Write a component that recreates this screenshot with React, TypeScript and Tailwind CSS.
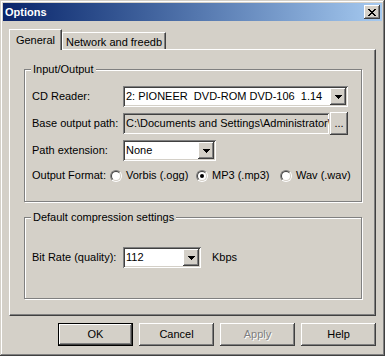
import React from 'react';

const raised =
  'shadow-[inset_-1px_-1px_#404040,inset_1px_1px_#fff,inset_-2px_-2px_#808080,inset_2px_2px_#d4d0c8]';
const sunken =
  'shadow-[inset_1px_1px_#808080,inset_-1px_-1px_#fff,inset_2px_2px_#404040,inset_-2px_-2px_#d4d0c8]';

function DownArrow() {
  return (
    <svg width="7" height="4" viewBox="0 0 7 4" shapeRendering="crispEdges">
      <rect x="0" y="0" width="7" height="1" fill="#000" />
      <rect x="1" y="1" width="5" height="1" fill="#000" />
      <rect x="2" y="2" width="3" height="1" fill="#000" />
      <rect x="3" y="3" width="1" height="1" fill="#000" />
    </svg>
  );
}

const closeRows = ['11000011', '01100110', '00111100', '00011000', '00111100', '01100110', '11000011'];

function CloseGlyph() {
  return (
    <svg width="8" height="7" viewBox="0 0 8 7" shapeRendering="crispEdges">
      {closeRows.map((row, y) =>
        row.split('').map((c, x) => (c === '1' ? <rect key={`${x}-${y}`} x={x} y={y} width="1" height="1" fill="#000" /> : null))
      )}
    </svg>
  );
}

function Combo({ value, className }: { value: string; className: string }) {
  return (
    <div className={`flex h-[21px] p-[2px] bg-white ${sunken} ${className}`}>
      <div className="flex-1 flex items-center pl-[1px] overflow-hidden whitespace-pre">{value}</div>
      <div className={`w-[16px] flex items-center justify-center bg-[#d4d0c8] ${raised}`}>
        <DownArrow />
      </div>
    </div>
  );
}

function Radio({ label, checked, className }: { label: string; checked?: boolean; className: string }) {
  return (
    <div className={`flex items-center ${className}`}>
      <div className="w-[12px] h-[12px] rounded-full border border-t-[#808080] border-l-[#808080] border-r-white border-b-white">
        <div className="w-full h-full rounded-full border border-t-[#404040] border-l-[#404040] border-r-[#d4d0c8] border-b-[#d4d0c8] bg-white flex items-center justify-center">
          {checked && <div className="w-[4px] h-[4px] rounded-full bg-black" />}
        </div>
      </div>
      <span className="ml-[4px]">{label}</span>
    </div>
  );
}

function Group({ title, className, children }: { title: string; className: string; children: React.ReactNode }) {
  return (
    <div className={`w-[338px] border border-[#808080] shadow-[1px_1px_#fff,inset_1px_1px_#fff] flex flex-col ${className}`}>
      <span className="-mt-[7px] ml-[6px] px-[2px] w-fit bg-[#d4d0c8] leading-[13px]">{title}</span>
      {children}
    </div>
  );
}

function Button({ label, isDefault, disabled }: { label: string; isDefault?: boolean; disabled?: boolean }) {
  return (
    <div className={`w-[75px] h-[23px] ${isDefault ? 'border border-black' : ''}`}>
      <div
        className={`w-full h-full flex items-center justify-center ${raised} ${
          disabled ? 'text-[#808080] [text-shadow:1px_1px_#fff]' : ''
        }`}
      >
        {label}
      </div>
    </div>
  );
}

export default function App() {
  return (
    <div
      className="w-[385px] h-[356px] bg-[#d4d0c8] p-[3px] flex flex-col text-[11px] leading-[13px] text-black shadow-[inset_-1px_-1px_#404040,inset_1px_1px_#d4d0c8,inset_-2px_-2px_#808080,inset_2px_2px_#fff]"
      style={{ fontFamily: '"Liberation Sans", Arial, sans-serif' }}
    >
      {/* title bar */}
      <div className="h-[18px] flex items-center justify-between pl-[2px] pr-[2px] bg-gradient-to-r from-[#0a246a] to-[#a6caf0]">
        <span className="text-white font-bold">Options</span>
        <div className={`w-[16px] h-[14px] bg-[#d4d0c8] flex items-center justify-center ${raised}`}>
          <CloseGlyph />
        </div>
      </div>

      <div className="flex flex-col px-[6px]">
        {/* tabs */}
        <div className="mt-[8px] h-[20px] flex items-end">
          <div className="relative z-10 -mb-px w-[53px] h-[21px] bg-[#d4d0c8] border-l border-t border-white border-r border-r-[#404040] shadow-[inset_-1px_0_#808080] flex justify-center pt-[4px]">
            General
          </div>
          <div className="w-[104px] h-[17px] border-l border-t border-white border-r border-r-[#404040] shadow-[inset_-1px_0_#808080] flex justify-center pt-[3px]">
            Network and freedb
          </div>
        </div>

        {/* tab page */}
        <div className="h-[267px] border-l border-t border-white border-r border-b border-r-[#404040] border-b-[#404040] shadow-[inset_-1px_-1px_#808080] flex flex-col pl-[14px] pt-[19px]">
          <Group title="Input/Output" className="pb-[19px]">
            <div className="mt-[10px] pl-[7px] flex items-center h-[21px]">
              <span className="w-[91px]">CD Reader:</span>
              <Combo value="2: PIONEER  DVD-ROM DVD-106  1.14" className="w-[225px]" />
            </div>
            <div className="mt-[5px] pl-[7px] flex items-center h-[23px]">
              <span className="w-[91px]">Base output path:</span>
              <div className={`w-[206px] h-[21px] p-[2px] flex items-center pl-[3px] overflow-hidden whitespace-nowrap ${sunken}`}>
                C:\Documents and Settings\Administrator\
              </div>
              <div className={`ml-[1px] w-[18px] h-[23px] flex items-end justify-center pb-[5px] ${raised}`}>...</div>
            </div>
            <div className="mt-[5px] pl-[7px] flex items-center h-[21px]">
              <span className="w-[91px]">Path extension:</span>
              <Combo value="None" className="w-[93px]" />
            </div>
            <div className="mt-[8px] pl-[7px] flex items-center h-[13px]">
              <span className="w-[78px]">Output Format:</span>
              <Radio label="Vorbis (.ogg)" className="w-[86px]" />
              <Radio label="MP3 (.mp3)" checked className="w-[84px]" />
              <Radio label="Wav (.wav)" className="" />
            </div>
          </Group>

          <Group title="Default compression settings" className="mt-[15px] pb-[30px]">
            <div className="mt-[23px] pl-[7px] flex items-center h-[21px]">
              <span className="w-[91px]">Bit Rate (quality):</span>
              <Combo value="112" className="w-[78px]" />
              <span className="ml-[11px]">Kbps</span>
            </div>
          </Group>
        </div>

        {/* buttons */}
        <div className="mt-[7px] flex justify-end gap-[6px]">
          <Button label="OK" isDefault />
          <Button label="Cancel" />
          <Button label="Apply" disabled />
          <Button label="Help" />
        </div>
      </div>
    </div>
  );
}
